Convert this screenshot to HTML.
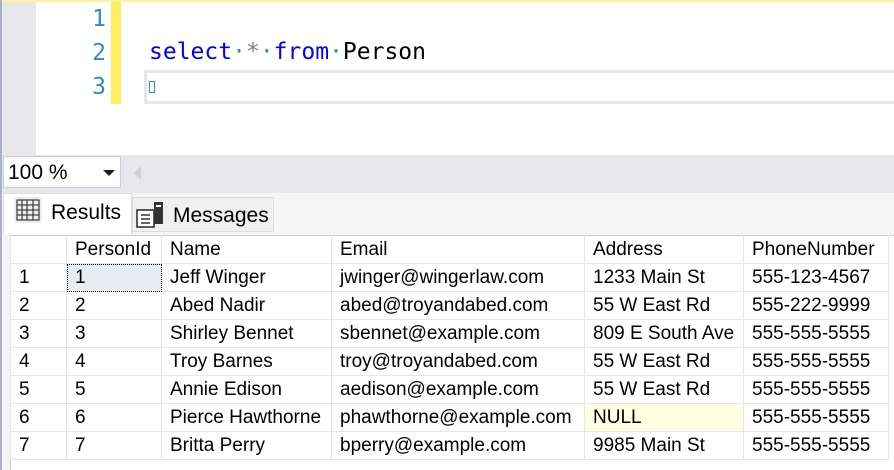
<!DOCTYPE html>
<html><head><style>
*{margin:0;padding:0;box-sizing:border-box}
body{width:894px;height:470px;overflow:hidden;background:#fff;position:relative;font-family:"Liberation Sans",sans-serif}
.a{position:absolute}
.mono{font-family:"DejaVu Sans Mono","Liberation Mono",monospace;font-size:23px}
table{border-collapse:collapse;position:absolute;left:10px;top:235px;font-size:19px;table-layout:fixed}
td{border:1px solid #e6e6e6;height:28px;padding:0 0 0 8px;white-space:nowrap;overflow:hidden;color:#000}
tr.h td{height:28px;border-top:1px solid #ccc}
</style></head><body>
<div class="a" style="left:0;top:0;width:2px;height:470px;background:#a8b0cc"></div>
<div class="a" style="left:2px;top:0;width:892px;height:2px;background:#fdf3a0"></div>
<div class="a" style="left:2px;top:2px;width:34px;height:153px;background:#e8e8ec"></div>
<div class="a" style="left:111px;top:2px;width:10px;height:102px;background:#ffee62"></div>
<div class="a mono" style="left:60px;top:2px;width:46px;text-align:right;color:#2b91af;line-height:34px">1<br>2<br>3</div>
<div class="a" style="left:144px;top:70px;width:760px;height:34px;border:3px solid #e6e6ee;border-right:none"></div>
<div class="a mono" style="left:149px;top:35px;line-height:34px;white-space:pre"><span style="color:#0000ff">select</span><span style="color:#2b91af">·</span><span style="color:#808080">*</span><span style="color:#2b91af">·</span><span style="color:#0000ff">from</span><span style="color:#2b91af">·</span>Person</div>
<div class="a" style="left:149px;top:81px;width:6px;height:12px;border:1.5px solid #2b91af"></div>
<div class="a" style="left:2px;top:155px;width:892px;height:38px;background:#e8e8ec"></div>
<div class="a" style="left:3px;top:156px;width:118px;height:32px;background:#fff;border:1px solid #c8cce0;font-size:21px;line-height:32px;padding-left:4px">100 %</div>
<div class="a" style="left:103px;top:170px;border-left:6px solid transparent;border-right:6px solid transparent;border-top:6px solid #1e1e1e"></div>
<div class="a" style="left:134px;top:166px;border-top:7px solid transparent;border-bottom:7px solid transparent;border-right:7px solid #d0d0d8"></div>
<div class="a" style="left:2px;top:193px;width:892px;height:277px;background:#f5f5f5"></div>
<div class="a" style="left:3px;top:193px;width:129px;height:42px;background:#fff;border:1px solid #ddd;border-bottom:none;font-size:21px;line-height:38px;padding-left:47px">Results</div>
<svg class="a" style="left:14px;top:197px" width="30" height="28"><rect x="0" y="0" width="28" height="26" fill="#eee"/><g stroke="#444" stroke-width="1.3" fill="none"><rect x="3" y="3" width="22" height="20"/><path d="M3 8H25M3 13H25M3 18H25M8 3V23M13 3V23M19 3V23"/></g></svg>
<div class="a" style="left:132px;top:197px;width:142px;height:35px;background:#f0f0f0;border:1px solid #ddd;font-size:21px;line-height:36px;padding-left:40px">Messages</div>
<svg class="a" style="left:136px;top:200px" width="30" height="30"><rect x="1" y="10" width="17" height="17" fill="#fff" stroke="#333" stroke-width="1.6"/><path d="M5 15H14M5 19H14M5 23H14" stroke="#333" stroke-width="1.5"/><rect x="18" y="2" width="9" height="22" fill="#333"/><rect x="20" y="5" width="5" height="2" fill="#fff"/></svg>
<div class="a" style="left:10px;top:235px;width:884px;height:235px;background:#fff;border-left:1px solid #ccc;border-top:1px solid #ccc"></div>
<table>
<colgroup><col style="width:56px"><col style="width:95px"><col style="width:170px"><col style="width:253px"><col style="width:159px"><col style="width:145px"></colgroup>
<tr class="h"><td></td><td>PersonId</td><td>Name</td><td>Email</td><td>Address</td><td>PhoneNumber</td></tr>
<tr><td>1</td><td style="background:#e8edf2;outline:1px dotted #000;outline-offset:-1px">1</td><td>Jeff Winger</td><td>jwinger@wingerlaw.com</td><td>1233 Main St</td><td>555-123-4567</td></tr>
<tr><td>2</td><td>2</td><td>Abed Nadir</td><td>abed@troyandabed.com</td><td>55 W East Rd</td><td>555-222-9999</td></tr>
<tr><td>3</td><td>3</td><td>Shirley Bennet</td><td>sbennet@example.com</td><td>809 E South Ave</td><td>555-555-5555</td></tr>
<tr><td>4</td><td>4</td><td>Troy Barnes</td><td>troy@troyandabed.com</td><td>55 W East Rd</td><td>555-555-5555</td></tr>
<tr><td>5</td><td>5</td><td>Annie Edison</td><td>aedison@example.com</td><td>55 W East Rd</td><td>555-555-5555</td></tr>
<tr><td>6</td><td>6</td><td>Pierce Hawthorne</td><td>phawthorne@example.com</td><td style="background:#ffffe1">NULL</td><td>555-555-5555</td></tr>
<tr><td>7</td><td>7</td><td>Britta Perry</td><td>bperry@example.com</td><td>9985 Main St</td><td>555-555-5555</td></tr>
</table>
</body></html>
